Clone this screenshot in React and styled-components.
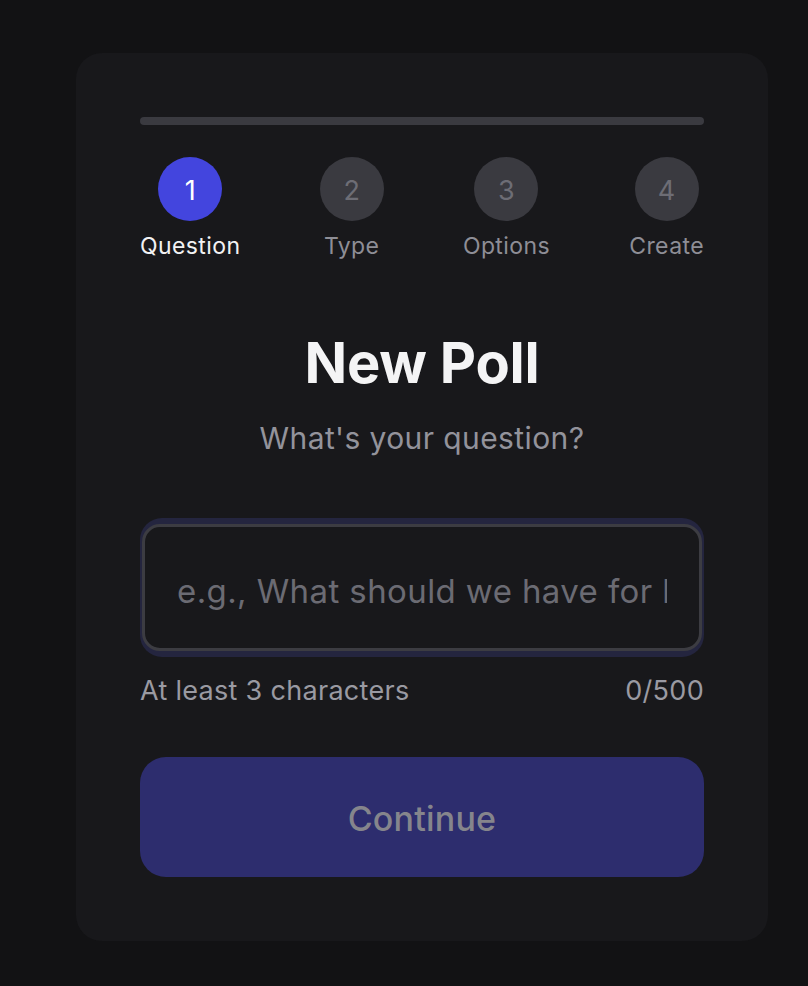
import React from "react";
import styled, { createGlobalStyle } from "styled-components";

const Global = createGlobalStyle`
  * { box-sizing: border-box; }
  html, body { margin: 0; padding: 0; background: #121214; }
  body { font-family: Inter, "Noto Sans", sans-serif; -webkit-font-smoothing: antialiased; }
`;

const Page = styled.div`
  min-height: 986px;
  padding: 53px 40px 46px 76px;
  background: #121214;
`;

const Card = styled.div`
  background: #18181b;
  border-radius: 26px;
  padding: 64px;
  display: flex;
  flex-direction: column;
`;

const Progress = styled.div`
  height: 8px;
  border-radius: 4px;
  background: #3a3a40;
`;

const Steps = styled.div`
  display: flex;
  justify-content: space-between;
  margin-top: 32px;
`;

const Step = styled.div`
  display: flex;
  flex-direction: column;
  align-items: center;
  gap: 12px;
`;

const Circle = styled.div`
  width: 64px;
  height: 64px;
  border-radius: 50%;
  display: flex;
  align-items: center;
  justify-content: center;
  padding-top: 3px;
  font-size: 27px;
  font-weight: 400;
  background: ${(p) => (p.$active ? "#4345de" : "#3a3a40")};
  color: ${(p) => (p.$active ? "#ffffff" : "#6d6d75")};
`;

const StepLabel = styled.div`
  font-size: 23px;
  line-height: 27px;
  letter-spacing: 0.4px;
  color: ${(p) => (p.$active ? "#f2f2f3" : "#8e8e96")};
`;

const Title = styled.h1`
  margin: 70px 0 0;
  text-align: center;
  font-size: 56px;
  line-height: 67px;
  font-weight: 700;
  color: #f4f4f5;
  letter-spacing: -0.2px;
`;

const Subtitle = styled.p`
  margin: 23px 0 0;
  text-align: center;
  font-size: 30px;
  line-height: 36px;
  letter-spacing: 0.4px;
  color: #93939b;
`;

const FieldRing = styled.div`
  margin-top: 62px;
  background: #24253f;
  border-radius: 22px;
  padding: 6px 2px;
`;

const Input = styled.input`
  display: block;
  width: 100%;
  height: 127px;
  border: 3px solid #3c3c42;
  border-radius: 18px;
  background: #18181b;
  padding: 6px 32px 0;
  font-family: inherit;
  font-size: 33px;
  letter-spacing: 0.4px;
  color: #f4f4f5;
  outline: none;
  &::placeholder { color: #6b6b73; }
`;

const HelperRow = styled.div`
  display: flex;
  justify-content: space-between;
  margin-top: 18px;
  font-size: 27px;
  line-height: 32px;
  letter-spacing: 0.3px;
  color: #9a9aa2;
`;

const Button = styled.button`
  margin-top: 50px;
  height: 120px;
  border: none;
  border-radius: 26px;
  background: #2d2d6e;
  color: #85858c;
  font-family: inherit;
  font-size: 34px;
  font-weight: 500;
  letter-spacing: 0.2px;
  padding-top: 3px;
  cursor: not-allowed;
`;

const steps = ["Question", "Type", "Options", "Create"];

export default function App() {
  return (
    <>
      <Global />
      <Page>
        <Card>
          <Progress />
          <Steps>
            {steps.map((s, i) => (
              <Step key={s}>
                <Circle $active={i === 0}>{i + 1}</Circle>
                <StepLabel $active={i === 0}>{s}</StepLabel>
              </Step>
            ))}
          </Steps>
          <Title>New Poll</Title>
          <Subtitle>What's your question?</Subtitle>
          <FieldRing>
            <Input placeholder="e.g., What should we have for lunch?" />
          </FieldRing>
          <HelperRow>
            <span>At least 3 characters</span>
            <span>0/500</span>
          </HelperRow>
          <Button disabled>Continue</Button>
        </Card>
      </Page>
    </>
  );
}
